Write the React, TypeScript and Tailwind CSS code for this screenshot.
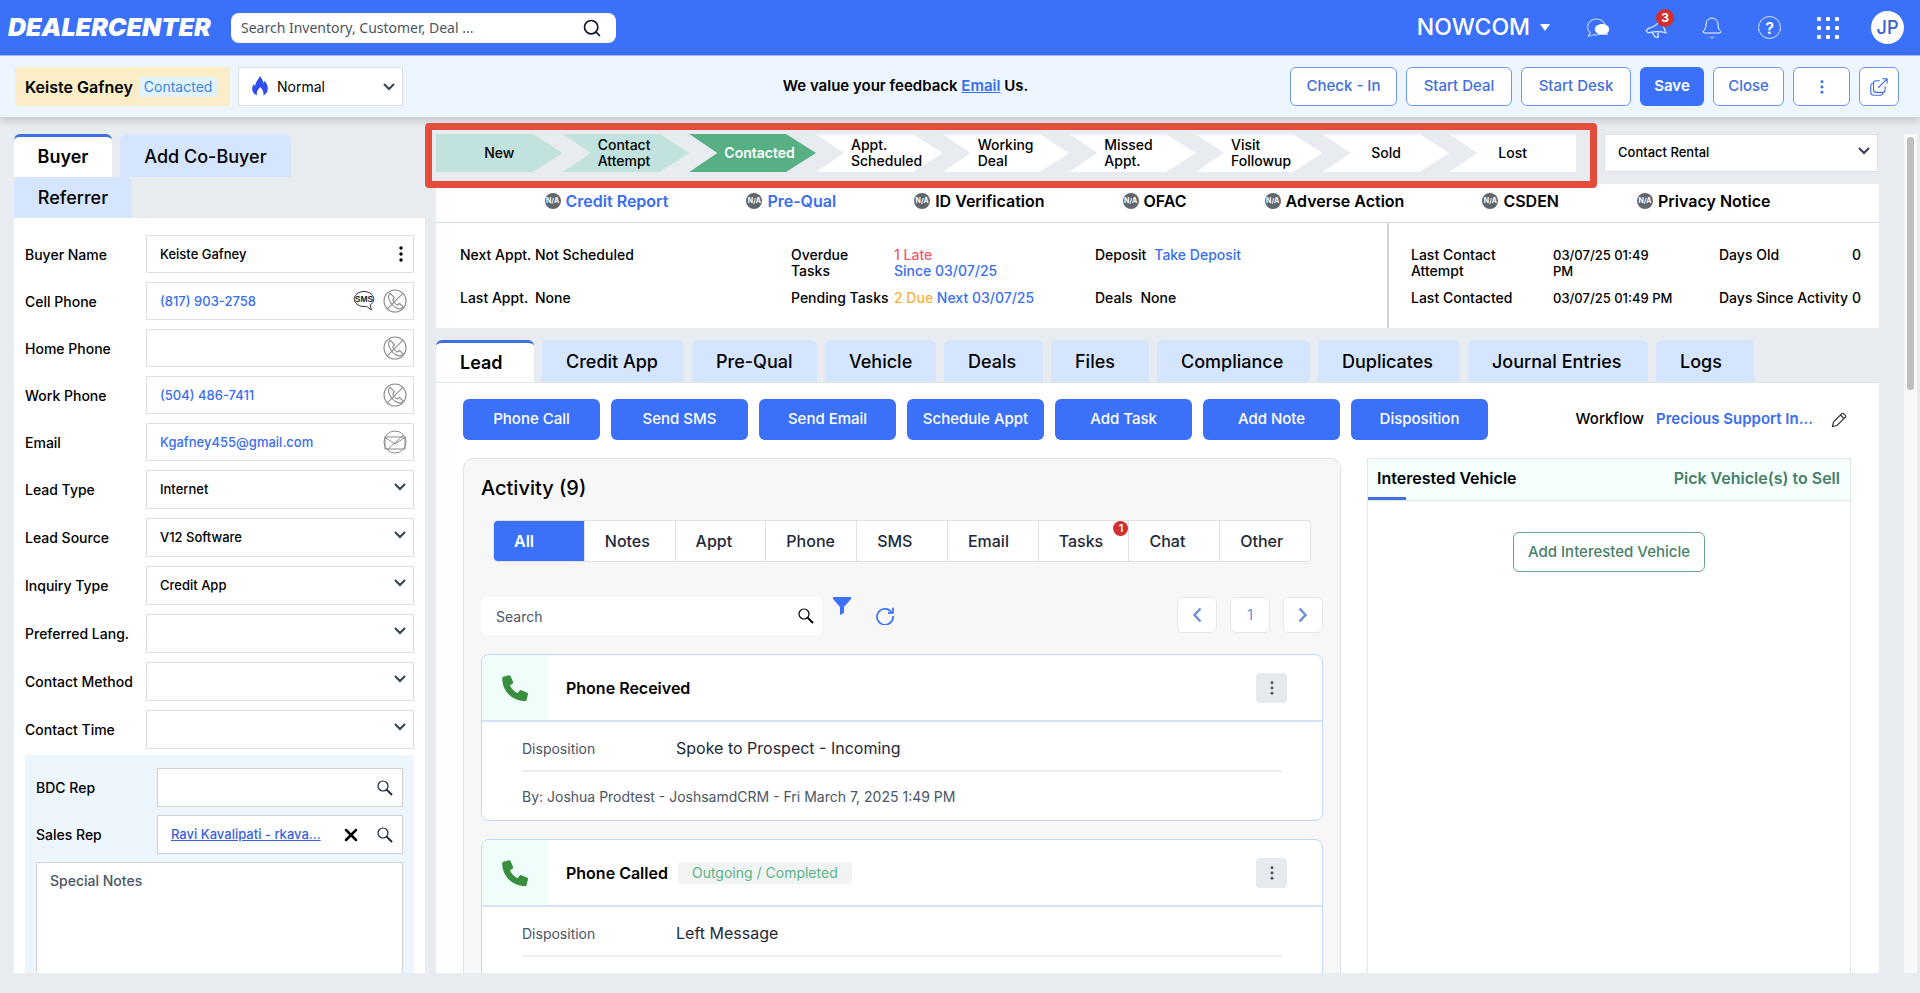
import React from 'react';
import clsx from 'clsx';
import { Bell, Search, X } from 'lucide-react';

type FieldKind = 'name' | 'phone' | 'cell' | 'email' | 'select';

interface Field {
  id: string;
  label: string;
  value: string;
  kind: FieldKind;
}

interface Activity {
  title: string;
  tag?: string;
  disposition: string;
  by?: string;
}

const fields: Field[] = [
  { id: 'buyer-name', label: 'Buyer Name', value: 'Keiste Gafney', kind: 'name' },
  { id: 'cell-phone', label: 'Cell Phone', value: '(817) 903-2758', kind: 'cell' },
  { id: 'home-phone', label: 'Home Phone', value: '', kind: 'phone' },
  { id: 'work-phone', label: 'Work Phone', value: '(504) 486-7411', kind: 'phone' },
  { id: 'email', label: 'Email', value: 'Kgafney455@gmail.com', kind: 'email' },
  { id: 'lead-type', label: 'Lead Type', value: 'Internet', kind: 'select' },
  { id: 'lead-source', label: 'Lead Source', value: 'V12 Software', kind: 'select' },
  { id: 'inquiry-type', label: 'Inquiry Type', value: 'Credit App', kind: 'select' },
  { id: 'preferred-lang', label: 'Preferred Lang.', value: '', kind: 'select' },
  { id: 'contact-method', label: 'Contact Method', value: '', kind: 'select' },
  { id: 'contact-time', label: 'Contact Time', value: '', kind: 'select' },
];

const stages: string[][] = [
  ['New'],
  ['Contact', 'Attempt'],
  ['Contacted'],
  ['Appt.', 'Scheduled'],
  ['Working', 'Deal'],
  ['Missed', 'Appt.'],
  ['Visit', 'Followup'],
  ['Sold'],
  ['Lost'],
];
const currentStage = 2;

const checks = [
  { label: 'Credit Report', link: true },
  { label: 'Pre-Qual', link: true },
  { label: 'ID Verification' },
  { label: 'OFAC' },
  { label: 'Adverse Action' },
  { label: 'CSDEN' },
  { label: 'Privacy Notice' },
];

const tabs = [
  { label: 'Lead', width: 'w-[98px]' },
  { label: 'Credit App', width: 'w-[142px]' },
  { label: 'Pre-Qual', width: 'w-[125px]' },
  { label: 'Vehicle', width: 'w-[111px]' },
  { label: 'Deals', width: 'w-[99px]' },
  { label: 'Files', width: 'w-[98px]' },
  { label: 'Compliance', width: 'w-[153px]' },
  { label: 'Duplicates', width: 'w-[142px]' },
  { label: 'Journal Entries', width: 'w-[180px]' },
  { label: 'Logs', width: 'w-[98px]' },
];

const actions = ['Phone Call', 'Send SMS', 'Send Email', 'Schedule Appt', 'Add Task', 'Add Note', 'Disposition'];

const filters = ['All', 'Notes', 'Appt', 'Phone', 'SMS', 'Email', 'Tasks', 'Chat', 'Other'];

const activities: Activity[] = [
  {
    title: 'Phone Received',
    disposition: 'Spoke to Prospect - Incoming',
    by: 'By: Joshua Prodtest - JoshsamdCRM - Fri March 7, 2025 1:49 PM',
  },
  {
    title: 'Phone Called',
    tag: 'Outgoing / Completed',
    disposition: 'Left Message',
  },
];

/* ---------- icons ---------- */

const Chevron: React.FC<{ className?: string }> = ({ className }) => (
  <svg viewBox="0 0 12 8" className={clsx('w-3 h-2 pointer-events-none', className)} fill="none" stroke="currentColor" strokeWidth="2">
    <path d="M1 1l5 5 5-5" />
  </svg>
);

const Dots: React.FC<{ className?: string }> = ({ className }) => (
  <svg viewBox="0 0 4 16" className={className} fill="currentColor">
    <circle cx="2" cy="2" r="1.7" />
    <circle cx="2" cy="8" r="1.7" />
    <circle cx="2" cy="14" r="1.7" />
  </svg>
);

const Magnifier: React.FC<{ className?: string }> = ({ className }) => (
  <svg viewBox="0 0 16 16" className={className} fill="none" stroke="currentColor">
    <circle cx="6" cy="6" r="5" strokeWidth="1.2" />
    <path d="M9.6 9.6L15 15" strokeWidth="2" />
  </svg>
);

const NoCall = () => (
  <svg viewBox="0 0 24 24" className="w-6 h-6" fill="none" stroke="#8c8c8c" strokeWidth="1.1">
    <circle cx="12" cy="12" r="11" />
    <path d="M7.2 4.2c-1.6 1.2-2 3.2-1.2 6 1.5 4.6 4.8 8 9.3 9.4 1.9.6 3.7-.2 4.6-1.9l-3.4-3.2-2.3 1.5c-2.1-1-3.6-2.7-4.4-4.9l1.6-2.2z" />
    <path d="M4.3 19.8L19.8 4.3" />
  </svg>
);

const NoMail = () => (
  <svg viewBox="0 0 24 24" className="w-6 h-6" fill="none" stroke="#8c8c8c" strokeWidth="1">
    <circle cx="12" cy="12" r="11" />
    <rect x="2" y="7" width="20" height="12" />
    <path d="M2 7.5L12 14l10-6.5M4.5 19.500L20 5.500" />
  </svg>
);

const Sms = () => (
  <svg viewBox="0 0 22 22" className="w-[22px] h-[22px]">
    <path
      d="M11 1.5c5.5 0 9.8 3.3 9.8 7.5 0 2.5-1.4 4.7-3.7 6l1.4 5-5-3.7c-.8.2-1.6.2-2.5.2C5.5 16.5 1.2 13.2 1.2 9S5.5 1.5 11 1.5z"
      fill="none"
      stroke="#333"
      strokeWidth="1"
    />
    <text x="11" y="12" textAnchor="middle" fontSize="8.5" fontWeight="700" fontFamily="Liberation Sans, sans-serif" fill="#222">
      SMS
    </text>
  </svg>
);

const ChatBubbles = () => (
  <svg viewBox="0 0 24 20" className="w-6 h-5">
    <path
      d="M10.5 1C5.5 1 1.5 4.6 1.5 9c0 2.4 1.1 4.4 2.9 5.9L2.5 17.9c2 .2 3.8-.3 5.1-1.3 1 .3 1.9.4 2.9.4 4.9 0 9-3.6 9-8s-4.1-8-9-8z"
      fill="none"
      stroke="#c7d7fd"
      strokeWidth="1.1"
    />
    <path d="M16 6c4 0 7.2 2.3 7.2 5.3 0 1.5-.8 2.9-2.1 3.8l1 2-3-.7c-1 .2-2 .3-3.1.3-4 0-7.2-2.4-7.2-5.4S12 6 16 6z" fill="#fff" />
  </svg>
);

const Megaphone = () => (
  <svg viewBox="0 0 24 24" className="w-6 h-6" fill="none" stroke="#dbe6ff" strokeWidth="1.3" strokeLinejoin="round">
    <path d="M16.5 3.5c-2 4-5.5 6.8-10.5 8.4-2.3.8-3.9 2-3.5 3.3.3 1.2 1.6 1.8 3.7 1.3 5.3-1.4 10.3-1.3 15.8.5z" />
    <path d="M8.3 16.4l2 3.6c.5 1.4 3 1.7 4.2.9l-.9-2.3 1-2" />
  </svg>
);

const OpenWindow = () => (
  <svg viewBox="0 0 20 20" className="w-5 h-5" fill="none" stroke="currentColor" strokeWidth="1.1" strokeLinecap="round">
    <path d="M10.5 3.8H6.8c-1.3 0-2.3 1-2.3 2.3v7c0 1.3 1 2.3 2.3 2.3h7c1.3 0 2.3-1 2.3-2.3V9.5" />
    <path d="M4.5 6.3c-1.7 0-2.7 1-2.7 2.3v7c0 1.5 1.1 2.6 2.6 2.6h7c1.5 0 2.4-1 2.6-2.5" />
    <path d="M9.5 10.5l8.5-8.7M13.7 1.7h4.4v4.4" />
  </svg>
);

const Handset = () => (
  <svg viewBox="0 0 28 28" className="w-7 h-7" fill="#388e3c">
    <path d="M2.2 2.8L8 1.2c.6-.2 1.2.1 1.5.7l2.6 6.1c.2.6.1 1.1-.4 1.5L9 11.6c1.7 3.5 4.2 6 7.5 7.6l2.3-2.6c.4-.5 1-.6 1.5-.4l6 2.6c.6.2.9.8.7 1.5l-1.4 5.8c-.1.6-.6 1-1.3 1C11.3 27.1 1.2 17 1.2 4.2c0-.7.4-1.2 1-1.4z" />
  </svg>
);

/* ---------- header ---------- */

const TopBar = () => (
  <header className="flex h-14 shrink-0 items-center bg-[#3a71f8] pl-2 pr-4 text-white border-b border-[#a9c0f8]">
    <div className="w-[223px] text-[25px] leading-none font-black italic">DEALERCENTER</div>
    <div className="flex h-[30px] w-[385px] items-center rounded-lg bg-white px-[10px] pr-[14px] text-gray-900">
      <input
        aria-label="Search"
        placeholder="Search Inventory, Customer, Deal ..."
        className="flex-1 bg-transparent font-['Noto_Sans',sans-serif] text-[14px] outline-none placeholder:text-gray-600"
      />
      <Search className="w-5 h-5" strokeWidth={2} />
    </div>
    <div className="ml-auto flex items-center">
      <button className="flex items-center gap-[10px] text-[23px] font-medium">
        NOWCOM
        <svg viewBox="0 0 10 7" className="w-[10px] h-[7px]" fill="currentColor">
          <path d="M0 0h10L5 7z" />
        </svg>
      </button>
      <button className="ml-9" aria-label="Messages">
        <ChatBubbles />
      </button>
      <button className="relative ml-[34px]" aria-label="Announcements">
        <Megaphone />
        <span className="absolute -top-[7px] left-3 flex w-[18px] h-[18px] items-center justify-center rounded-full bg-[#d32f2f] text-xs font-bold">3</span>
      </button>
      <button className="ml-8" aria-label="Notifications">
        <Bell className="w-6 h-6" strokeWidth={1} />
      </button>
      <button className="ml-[34px] flex w-[23px] h-[23px] items-center justify-center rounded-full border border-[#dbe6ff] text-base font-semibold" aria-label="Help">
        ?
      </button>
      <button className="ml-9 grid grid-cols-3 gap-[5px]" aria-label="Apps">
        {Array.from({ length: 9 }, (_, i) => (
          <span key={i} className="w-1 h-1 rounded-[1px] bg-white" />
        ))}
      </button>
      <button className="ml-8 flex w-[33px] h-[33px] items-center justify-center rounded-full bg-white text-lg font-medium text-[#3a63c8]">JP</button>
    </div>
  </header>
);

const outline = 'flex h-[39px] items-center justify-center rounded-md border border-[#6f95f5] bg-white text-[15px] font-medium text-[#3f6fe0]';

const CustomerBar = () => (
  <div className="relative z-10 flex h-[61px] shrink-0 items-center bg-[#edf6fe] pl-[15px] pr-[21px] shadow-[0_3px_8px_rgba(0,0,0,0.18)]">
    <div className="flex h-[39px] w-[215px] items-center gap-1.5 whitespace-nowrap bg-[#fbedc8] pl-[10px] text-base font-semibold">
      Keiste Gafney
      <span className="rounded bg-[#e1f3fc] px-[5px] text-sm font-normal text-[#3f86dc]">Contacted</span>
    </div>
    <div className="relative ml-2 h-[39px] w-[165px]">
      <svg viewBox="0 0 16 20" className="absolute left-[14px] top-[9px] w-4 h-5" fill="#2f4df0">
        <path d="M8 0c1.5 2.5 3 4.5 3.5 7 .6-.7 1-1.4 1.2-2.2C14.8 7.5 16 10.5 15.8 13c-.2 3.2-2 5.5-4.6 6.5.8-2.5.2-5.2-3-8.5-3 3-4 6-3.2 8.5C2 18.5.3 16 .2 13c0-1.9.6-3.5 1.7-5 .3.9.7 1.5 1.3 2C3.4 6 6 4 8 0z" />
      </svg>
      <select aria-label="Priority" className="h-full w-full appearance-none border border-[#dde1e6] bg-white pl-[38px] text-sm outline-none">
        <option>Normal</option>
      </select>
      <Chevron className="absolute right-2 top-4 text-gray-700" />
    </div>
    <p className="flex-1 pl-[118px] text-center text-[15px] font-semibold">
      We value your feedback{' '}
      <a href="#email" className="text-[#3a6ef0] underline">
        Email
      </a>{' '}
      Us.
    </p>
    <div className="flex gap-[9px]">
      <button className={clsx(outline, 'w-[107px]')}>Check - In</button>
      <button className={clsx(outline, 'w-[106px]')}>Start Deal</button>
      <button className={clsx(outline, 'w-[110px]')}>Start Desk</button>
      <button className="h-[39px] w-16 rounded-md bg-[#3a71f8] text-[15px] font-semibold text-white">Save</button>
      <button className={clsx(outline, 'w-[71px]')}>Close</button>
      <button className={clsx(outline, 'w-[57px]')} aria-label="More">
        <Dots className="w-1 h-[14px]" />
      </button>
      <button className={clsx(outline, 'w-10')} aria-label="Open in new window">
        <OpenWindow />
      </button>
    </div>
  </div>
);

/* ---------- buyer panel ---------- */

const FieldRow: React.FC<{ field: Field }> = ({ field }) => {
  const isLink = field.kind === 'cell' || field.kind === 'phone' || field.kind === 'email';
  return (
    <div className="flex items-center">
      <label htmlFor={field.id} className="w-[121px] shrink-0 text-[14px]">
        {field.label}
      </label>
      {field.kind === 'select' ? (
        <div className="relative flex-1">
          <select id={field.id} className="block h-[39px] w-full appearance-none border border-[#dde1e6] bg-white pl-[13px] outline-none">
            <option>{field.value}</option>
          </select>
          <Chevron className="absolute right-2 top-[13px] text-gray-700" />
        </div>
      ) : (
        <div className="flex h-[38px] min-w-0 flex-1 items-center gap-2 border border-[#dde1e6] pl-[13px] pr-1.5">
          <input id={field.id} defaultValue={field.value} className={clsx('w-full min-w-0 flex-1 bg-transparent pt-0.5 outline-none', isLink && 'text-[#3a6ef0]')} />
          {field.kind === 'cell' && <Sms />}
          {(field.kind === 'cell' || field.kind === 'phone') && <NoCall />}
          {field.kind === 'email' && <NoMail />}
          {field.kind === 'name' && (
            <button aria-label="Name options" className="pr-1">
              <Dots className="w-1 h-4" />
            </button>
          )}
        </div>
      )}
    </div>
  );
};

const BuyerPanel = () => (
  <aside className="flex w-[411px] shrink-0 flex-col">
    <div className="flex flex-wrap gap-x-2 pr-4 text-lg font-medium">
      <button className="h-[43px] w-[98px] rounded-t-md border-t-[3px] border-[#3f6fe0] bg-white font-semibold">Buyer</button>
      <button className="h-[43px] w-[171px] rounded-t-md bg-[#d6e5fe] pt-0.5">Add Co-Buyer</button>
      <button className="h-[41px] w-[118px] rounded-t-md bg-[#d6e5fe]">Referrer</button>
    </div>
    <div className="flex min-h-0 flex-1 flex-col overflow-hidden bg-white px-[11px] pt-[17px] text-[13px] font-medium">
      <div className="flex flex-col gap-[9px]">
        {fields.map((field) => (
          <FieldRow key={field.id} field={field} />
        ))}
      </div>
      <div className="mt-1.5 flex min-h-0 flex-1 flex-col bg-[#edf5fd] px-[11px] pt-[13px]">
        <div className="flex items-center">
          <label htmlFor="bdc-rep" className="w-[121px] text-[14px]">
            BDC Rep
          </label>
          <div className="flex h-[39px] min-w-0 flex-1 items-center border border-[#cdd3d8] bg-white px-[9px]">
            <input id="bdc-rep" className="w-full min-w-0 flex-1 outline-none" />
            <Magnifier className="w-4 h-4 text-gray-800" />
          </div>
        </div>
        <div className="mt-2 flex items-center">
          <span className="w-[121px] text-[14px]">Sales Rep</span>
          <div className="flex h-[39px] flex-1 items-center border border-[#cdd3d8] bg-white pl-[13px] pr-[9px]">
            <a href="#sales-rep" className="whitespace-nowrap text-[#3a5fe0] underline">
              Ravi Kavalipati - rkava...
            </a>
            <button className="ml-auto" aria-label="Clear sales rep">
              <X className="w-5 h-5" strokeWidth={3} />
            </button>
            <button className="ml-4" aria-label="Find sales rep">
              <Magnifier className="w-4 h-4 text-gray-800" />
            </button>
          </div>
        </div>
        <textarea
          aria-label="Special Notes"
          placeholder="Special Notes"
          className="mt-2 min-h-0 flex-1 resize-none border border-b-0 border-[#cdd3d8] bg-white px-[13px] py-[7px] text-[14px] outline-none placeholder:text-gray-600"
        />
      </div>
    </div>
  </aside>
);

/* ---------- lead status ---------- */

const StageBar = () => (
  <div className="flex pr-px">
    <div className="relative mr-7 flex-1">
      <ol className="grid h-[38px] grid-cols-9 text-[14px] leading-4 font-medium">
        {stages.map((lines, i) => (
          <li
            key={lines[0] + i}
            className={clsx(
              'flex items-center',
              lines.length > 1 || i === currentStage ? 'pl-[35px]' : 'justify-center',
              i === 0 && 'bg-[#c1e2de] [clip-path:polygon(0_0,calc(100%-30px)_0,100%_50%,calc(100%-30px)_100%,0_100%)]',
              i > 0 && i < stages.length - 1 && '[clip-path:polygon(0_0,calc(100%-30px)_0,100%_50%,calc(100%-30px)_100%,0_100%,28px_50%)]',
              i === stages.length - 1 && '[clip-path:polygon(0_0,100%_0,100%_100%,0_100%,28px_50%)]',
              i > 0 && i < currentStage && 'bg-[#c1e2de]',
              i === currentStage && 'bg-[#57b083] font-semibold text-white',
              i > currentStage && 'bg-white',
            )}
          >
            <span>
              {lines.map((line) => (
                <span key={line} className="block">
                  {line}
                </span>
              ))}
            </span>
          </li>
        ))}
      </ol>
      <div className="pointer-events-none absolute -top-[11px] -bottom-4 -left-[11px] -right-[21px] z-20 rounded border-[7px] border-[#e44c3c]" />
    </div>
    <div className="relative w-[274px]">
      <select aria-label="Contact type" className="h-[38px] w-full appearance-none border border-[#dde1e6] bg-white pl-[13px] text-[13px] font-medium outline-none">
        <option>Contact Rental</option>
      </select>
      <Chevron className="absolute right-2 top-[13px] text-gray-700" />
    </div>
  </div>
);

const StatusPanel = () => (
  <section className="mt-3 bg-white">
    <ul className="flex h-[39px] items-center justify-center gap-[78px] border-b border-[#d5d8dc] pb-1 text-base font-semibold">
      {checks.map((check) => (
        <li key={check.label} className="flex items-center gap-[5px]">
          <span className="flex w-4 h-4 items-center justify-center rounded-full bg-[#5f666d] text-[7px] font-bold text-white">N/A</span>
          {check.link ? (
            <a href="#report" className="text-[#3a6ef0]">
              {check.label}
            </a>
          ) : (
            check.label
          )}
        </li>
      ))}
    </ul>
    <div className="flex h-[105px] text-[14px] leading-4 font-medium">
      <dl className="grid flex-1 content-start grid-cols-[75px_256px_103px_201px_1fr] gap-y-[11px] pl-6 pt-6">
        <dt>Next Appt.</dt>
        <dd>Not Scheduled</dd>
        <dt className="w-16">Overdue Tasks</dt>
        <dd>
          <span className="block text-[#ee5a70]">1 Late</span>
          <a href="#overdue" className="text-[#3a6ef0]">
            Since 03/07/25
          </a>
        </dd>
        <div className="flex gap-2">
          <dt>Deposit</dt>
          <dd>
            <a href="#deposit" className="text-[#3a6ef0]">
              Take Deposit
            </a>
          </dd>
        </div>
        <dt>Last Appt.</dt>
        <dd>None</dd>
        <dt>Pending Tasks</dt>
        <dd>
          <span className="text-[#f3b33e]">2 Due</span>{' '}
          <a href="#pending" className="text-[#3a6ef0]">
            Next 03/07/25
          </a>
        </dd>
        <div className="flex gap-2">
          <dt>Deals</dt>
          <dd>None</dd>
        </div>
      </dl>
      <dl className="grid w-[492px] content-start grid-cols-[142px_166px_1fr] gap-y-[11px] border-l-2 border-[#d0d4d8] pl-[22px] pr-[18px] pt-6">
        <dt className="w-24">Last Contact Attempt</dt>
        <dd className="w-[110px] text-[13px]">03/07/25 01:49 PM</dd>
        <div className="flex justify-between">
          <dt>Days Old</dt>
          <dd>0</dd>
        </div>
        <dt>Last Contacted</dt>
        <dd className="text-[13px]">03/07/25 01:49 PM</dd>
        <div className="flex justify-between whitespace-nowrap">
          <dt>Days Since Activity</dt>
          <dd>0</dd>
        </div>
      </dl>
    </div>
  </section>
);

/* ---------- lead tab ---------- */

const ActivityCard: React.FC<{ item: Activity }> = ({ item }) => (
  <article className="shrink-0 overflow-hidden rounded-lg border border-[#c3d6f8] bg-white">
    <div className="flex h-[67px] items-center border-b-2 border-[#d3e2f8]">
      <div className="flex h-full w-[66px] items-center justify-center bg-[#effefa]">
        <Handset />
      </div>
      <h3 className="ml-[18px] text-base font-semibold">{item.title}</h3>
      {item.tag && <span className="ml-[10px] rounded bg-[#f2f3f3] px-[14px] text-[14px] leading-[22px] text-[#5bb487]">{item.tag}</span>}
      <button aria-label={`${item.title} options`} className="ml-auto mr-[35px] flex h-[30px] w-[31px] items-center justify-center rounded bg-[#e6eaee] text-gray-600">
        <Dots className="w-1 h-[14px]" />
      </button>
    </div>
    <div className="px-10 text-[14px] text-gray-600">
      <dl className="flex h-[50px] items-center border-b-2 border-[#eceded] pt-1">
        <dt className="w-[154px]">Disposition</dt>
        <dd className="text-base text-gray-800">{item.disposition}</dd>
      </dl>
      <p className="flex h-12 items-center">{item.by}</p>
    </div>
  </article>
);

const pagerButton = 'flex h-9 w-10 items-center justify-center rounded-md border border-[#e6e8ea] bg-white text-[15px] text-[#6f8fd8]';

const ActivityPanel = () => (
  <section className="flex min-w-0 flex-1 flex-col overflow-hidden rounded-t-[10px] border border-b-0 border-[#dfe1e3] bg-[#f7f7f7] px-[17px]">
    <h2 className="mt-[15px] text-xl leading-7 font-medium">Activity (9)</h2>
    <div className="ml-3 mr-3 mt-[18px] flex h-[42px] divide-x divide-[#dfe1e3] rounded border border-[#dfe1e3] bg-white text-base font-medium text-gray-800">
      {filters.map((name, i) => (
        <button key={name} className={clsx('relative flex-1 pl-5 text-left', i === 0 && 'rounded-l bg-[#3a71f8] font-semibold text-white')}>
          {name}
          {name === 'Tasks' && (
            <span className="absolute right-0 top-0 flex w-[15px] h-[15px] items-center justify-center rounded-full bg-[#d32f2f] text-[11px] font-semibold text-white">1</span>
          )}
        </button>
      ))}
    </div>
    <div className="mt-[35px] flex h-[38px] items-start">
      <div className="flex h-[38px] w-[341px] items-center rounded bg-white pl-[15px] pr-2">
        <input aria-label="Search activity" placeholder="Search" className="min-w-0 flex-1 text-[14px] outline-none placeholder:text-gray-600" />
        <Magnifier className="w-4 h-4" />
      </div>
      <button className="ml-[11px]" aria-label="Filter">
        <svg viewBox="0 0 18 18" className="w-[18px] h-[18px]" fill="#3a71f8">
          <path d="M0 0h18v2l-7 8v6l-4 2v-8L0 2z" />
        </svg>
      </button>
      <button className="ml-[25px] self-center" aria-label="Refresh">
        <svg viewBox="0 0 18 18" className="w-[18px] h-[18px]" fill="none" stroke="#3a71f8" strokeWidth="1.7">
          <path d="M15.8 5.5A8 8 0 1 0 17 9" />
          <path d="M17 .8v5h-5" />
        </svg>
      </button>
      <div className="ml-auto flex gap-[13px]">
        <button className={pagerButton} aria-label="Previous page">
          <svg viewBox="0 0 10 16" className="w-[10px] h-4" fill="none" stroke="currentColor" strokeWidth="2.5">
            <path d="M8.5 1.5L2.5 8l6 6.5" />
          </svg>
        </button>
        <button className={pagerButton}>1</button>
        <button className={pagerButton} aria-label="Next page">
          <svg viewBox="0 0 10 16" className="w-[10px] h-4" fill="none" stroke="currentColor" strokeWidth="2.5">
            <path d="M1.5 1.5L7.5 8l-6 6.5" />
          </svg>
        </button>
      </div>
    </div>
    <div className="mt-[19px] flex min-h-0 flex-1 flex-col gap-[18px] overflow-hidden">
      {activities.map((item) => (
        <ActivityCard key={item.title} item={item} />
      ))}
    </div>
  </section>
);

const VehiclePanel = () => (
  <section className="w-[484px] shrink-0 border border-b-0 border-[#dfe5e6]">
    <div className="flex h-[42px] items-center justify-between border-b border-[#dfe8ea] bg-[#f5fffe] text-base font-semibold">
      <h2 className="relative flex h-full items-center pb-1 pl-[9px]">
        Interested Vehicle
        <span className="absolute bottom-0 left-0 h-[3px] w-[38px] bg-[#3f6fe0]" />
      </h2>
      <a href="#pick" className="pb-1 pr-[10px] text-[#478069]">
        Pick Vehicle(s) to Sell
      </a>
    </div>
    <button className="mx-auto mt-[31px] block h-10 w-[192px] rounded-md border border-[#6ba08c] text-[15px] font-medium text-[#478069]">Add Interested Vehicle</button>
  </section>
);

const LeadTabs = () => (
  <>
    <nav className="mt-3 flex shrink-0 gap-2 text-lg font-medium">
      {tabs.map((tab, i) => (
        <button
          key={tab.label}
          className={clsx(
            'h-[42px] rounded-t-md pl-6 text-left whitespace-nowrap',
            tab.width,
            i === 0 ? 'border-t-[3px] border-[#3f6fe0] bg-white font-semibold' : 'bg-[#d6e5fe] pt-0.5',
          )}
        >
          {tab.label}
        </button>
      ))}
    </nav>
    <div className="flex min-h-0 flex-1 flex-col border-t border-[#e0e3e8] bg-white pl-[27px] pr-7 pt-4">
      <div className="flex shrink-0 items-center gap-[11px]">
        {actions.map((action) => (
          <button key={action} className="h-[41px] w-[137px] rounded-md bg-[#3a71f8] text-[15px] font-medium text-white">
            {action}
          </button>
        ))}
        <div className="ml-auto flex items-center whitespace-nowrap text-[15px] font-medium">
          Workflow
          <a href="#workflow" className="ml-3 font-semibold text-[#3a6ef0]">
            Precious Support In...
          </a>
          <button className="ml-[18px] mr-1" aria-label="Edit workflow">
            <svg viewBox="0 0 16 16" className="w-4 h-4" fill="none" stroke="#333" strokeWidth="1.2">
              <path d="M1.5 14.5l1-4.5L10.8 1.7c.5-.6 1.3-.6 1.8 0l1.7 1.7c.6.5.6 1.3 0 1.8L6 13.5zM9.5 3l3.5 3.5" />
            </svg>
          </button>
        </div>
      </div>
      <div className="mt-[18px] flex min-h-0 flex-1 gap-[26px]">
        <ActivityPanel />
        <VehiclePanel />
      </div>
    </div>
  </>
);

export default function App() {
  return (
    <div className="flex h-screen flex-col overflow-hidden bg-[#e8ebf0] font-[Inter,'Open_Sans',sans-serif] text-black">
      <TopBar />
      <CustomerBar />
      <main className="flex min-h-0 flex-1 pb-5 pl-[14px] pr-[3px] pt-[17px]">
        <BuyerPanel />
        <div className="ml-[11px] flex min-w-0 flex-1 flex-col">
          <StageBar />
          <StatusPanel />
          <LeadTabs />
        </div>
        <div className="ml-[25px] w-[13px] bg-[#f8f8f8] px-[3px] pt-[3px]">
          <div className="h-[253px] rounded-full bg-[#bfbfbf]" />
        </div>
      </main>
    </div>
  );
}
